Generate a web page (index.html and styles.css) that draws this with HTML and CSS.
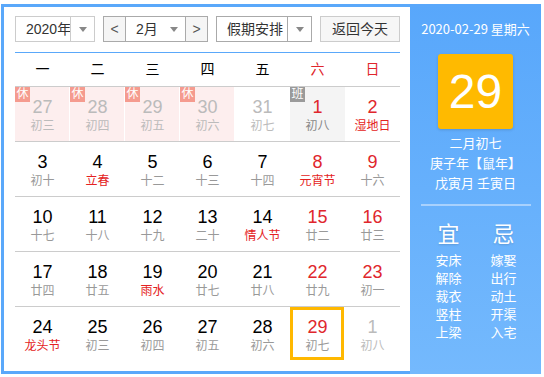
FILE: index.html
```html
<!DOCTYPE html>
<html lang="zh-CN">
    <head>
        <meta charset="UTF-8" />
        <title>万年历</title>
        <link rel="stylesheet" href="styles.css">
    </head>
    <body>
        <div class="calendar">
            <div class="main">
                <div class="toolbar">
                    <div class="select year">
                        <span class="text">2020年</span>
                        <span class="arrow"></span>
                    </div>
                    <div class="select month">
                        <span class="btn prev">&lt;</span>
                        <span class="text">2月</span>
                        <span class="arrow plain"></span>
                        <span class="btn next">&gt;</span>
                    </div>
                    <div class="select holiday">
                        <span class="text">假期安排</span>
                        <span class="arrow"></span>
                    </div>
                    <div class="today-btn">返回今天</div>
                </div>
                <div class="rule"></div>
                <div class="week">
                    <span>一</span><span>二</span><span>三</span><span>四</span><span>五</span>
                    <span class="red">六</span><span class="red">日</span>
                </div>
                <div class="days">
                    <div class="cell rest faded"><span class="tag">休</span><span class="num">27</span><span class="lunar">初三</span></div>
                    <div class="cell rest faded"><span class="tag">休</span><span class="num">28</span><span class="lunar">初四</span></div>
                    <div class="cell rest faded"><span class="tag">休</span><span class="num">29</span><span class="lunar">初五</span></div>
                    <div class="cell rest faded"><span class="tag">休</span><span class="num">30</span><span class="lunar">初六</span></div>
                    <div class="cell faded"><span class="num">31</span><span class="lunar">初七</span></div>
                    <div class="cell work weekend"><span class="tag">班</span><span class="num">1</span><span class="lunar">初八</span></div>
                    <div class="cell weekend"><span class="num">2</span><span class="lunar fest">湿地日</span></div>

                    <div class="cell"><span class="num">3</span><span class="lunar">初十</span></div>
                    <div class="cell"><span class="num">4</span><span class="lunar fest">立春</span></div>
                    <div class="cell"><span class="num">5</span><span class="lunar">十二</span></div>
                    <div class="cell"><span class="num">6</span><span class="lunar">十三</span></div>
                    <div class="cell"><span class="num">7</span><span class="lunar">十四</span></div>
                    <div class="cell weekend"><span class="num">8</span><span class="lunar fest">元宵节</span></div>
                    <div class="cell weekend"><span class="num">9</span><span class="lunar">十六</span></div>

                    <div class="cell"><span class="num">10</span><span class="lunar">十七</span></div>
                    <div class="cell"><span class="num">11</span><span class="lunar">十八</span></div>
                    <div class="cell"><span class="num">12</span><span class="lunar">十九</span></div>
                    <div class="cell"><span class="num">13</span><span class="lunar">二十</span></div>
                    <div class="cell"><span class="num">14</span><span class="lunar fest">情人节</span></div>
                    <div class="cell weekend"><span class="num">15</span><span class="lunar">廿二</span></div>
                    <div class="cell weekend"><span class="num">16</span><span class="lunar">廿三</span></div>

                    <div class="cell"><span class="num">17</span><span class="lunar">廿四</span></div>
                    <div class="cell"><span class="num">18</span><span class="lunar">廿五</span></div>
                    <div class="cell"><span class="num">19</span><span class="lunar fest">雨水</span></div>
                    <div class="cell"><span class="num">20</span><span class="lunar">廿七</span></div>
                    <div class="cell"><span class="num">21</span><span class="lunar">廿八</span></div>
                    <div class="cell weekend"><span class="num">22</span><span class="lunar">廿九</span></div>
                    <div class="cell weekend"><span class="num">23</span><span class="lunar">初一</span></div>

                    <div class="cell"><span class="num">24</span><span class="lunar fest">龙头节</span></div>
                    <div class="cell"><span class="num">25</span><span class="lunar">初三</span></div>
                    <div class="cell"><span class="num">26</span><span class="lunar">初四</span></div>
                    <div class="cell"><span class="num">27</span><span class="lunar">初五</span></div>
                    <div class="cell"><span class="num">28</span><span class="lunar">初六</span></div>
                    <div class="cell weekend today"><span class="num">29</span><span class="lunar">初七</span></div>
                    <div class="cell faded"><span class="num">1</span><span class="lunar">初八</span></div>
                </div>
            </div>
            <div class="side">
                <div class="date">2020-02-29 星期六</div>
                <div class="big">29</div>
                <div class="lunar-info">
                    <p>二月初七</p>
                    <p>庚子年【鼠年】</p>
                    <p>戊寅月 壬寅日</p>
                </div>
                <div class="divider"></div>
                <div class="yiji">
                    <div class="col">
                        <h3>宜</h3>
                        <p>安床</p><p>解除</p><p>裁衣</p><p>竖柱</p><p>上梁</p>
                    </div>
                    <div class="col">
                        <h3>忌</h3>
                        <p>嫁娶</p><p>出行</p><p>动土</p><p>开渠</p><p>入宅</p>
                    </div>
                </div>
            </div>
        </div>
    </body>
</html>
```

FILE: styles.css
```css
* {
    padding: 0;
    margin: 0;
    box-sizing: border-box;
}

body {
    background: #fff;
    font-family: "Liberation Sans", "Noto Sans CJK SC", sans-serif;
    color: #000;
}

.calendar {
    display: flex;
    width: 540px;
    height: 370px;
    margin: 4px 0 0 1px;
}

.main {
    width: 409px;
    border: 3px solid #5aa8fa;
    border-right: none;
    padding: 9px 10px 10px 11px;
}

/* toolbar */
.toolbar {
    display: flex;
    height: 26px;
}

.select {
    display: flex;
    height: 26px;
    border: 1px solid #ccc;
    font-size: 14px;
    line-height: 24px;
    color: #333;
    white-space: nowrap;
}

.select .text {
    padding-left: 10px;
    overflow: hidden;
}

.arrow {
    display: flex;
    align-items: center;
    justify-content: center;
    width: 24px;
    flex-shrink: 0;
    border-left: 1px solid #ccc;
}

.arrow::after {
    content: "";
    border: 4px solid transparent;
    border-top: 5px solid #888;
    border-bottom: 0;
}

.arrow.plain {
    border-left: none;
    width: 22px;
}

.year {
    width: 80px;
}

.year .text {
    width: 55px;
}

.month {
    width: 105px;
    margin-left: 8px;
    border-color: #aaa;
}

.month .text {
    flex: 1;
}

.btn {
    width: 22px;
    flex-shrink: 0;
    background: #f5f5f5;
    text-align: center;
    color: #555;
}

.prev {
    border-right: 1px solid #aaa;
}

.next {
    border-left: 1px solid #aaa;
}

.holiday {
    width: 96px;
    margin-left: 8px;
    border-color: #aaa;
}

.holiday .text {
    width: 70px;
    padding-left: 10px;
}

.holiday .arrow {
    border-left-color: #aaa;
}

.today-btn {
    width: 80px;
    margin-left: 8px;
    border: 1px solid #ccc;
    background: #f6f6f6;
    font-size: 14px;
    line-height: 24px;
    text-align: center;
    color: #333;
    white-space: nowrap;
}

.rule {
    height: 1px;
    background: #5aa8fa;
    margin-top: 10px;
}

/* grid */
.week {
    display: grid;
    grid-template-columns: repeat(7, 55px);
    height: 33px;
    line-height: 33px;
    font-size: 14px;
    text-align: center;
}

.red {
    color: #e0262c;
}

.days {
    display: grid;
    grid-template-columns: repeat(7, 55px);
    grid-auto-rows: 55px;
}

.cell {
    position: relative;
    border-top: 1px solid #ccc;
    padding-top: 11px;
    text-align: center;
}

.num {
    display: block;
    font-size: 18px;
    line-height: 18px;
}

.lunar {
    display: block;
    font-size: 12px;
    line-height: 20px;
    color: #999;
}

.weekend .num {
    color: #e0262c;
}

.fest {
    color: #e42222;
}

.faded .num,
.faded .lunar {
    color: #bbb;
}

.rest {
    background: #fdeeee;
    box-shadow: inset -1px 0 #fff;
}

.work {
    background: #f4f4f4;
}

.work .lunar {
    color: #888;
}

.tag {
    position: absolute;
    left: 0;
    top: 0;
    width: 15px;
    height: 15px;
    font-size: 12px;
    line-height: 15px;
    color: #fff;
    background: #f59b8f;
}

.work .tag {
    background: #9a9a9a;
}

.today::before {
    content: "";
    position: absolute;
    top: 0;
    left: 0;
    right: 1px;
    bottom: 1px;
    border: 3px solid #ffb800;
}

/* side panel */
.side {
    width: 131px;
    background: linear-gradient(#58a7fb, #74b9fd);
    color: #fff;
    text-align: center;
    padding-top: 15px;
    font-family: "Noto Sans CJK SC", "Liberation Sans", sans-serif;
}

.date {
    font-size: 13px;
    line-height: 20px;
}

.big {
    width: 75px;
    height: 75px;
    margin: 15px auto 0;
    background: #ffba00;
    border-radius: 3px;
    box-shadow: 0 1px 3px rgba(0, 0, 0, 0.15);
    font-family: "Liberation Sans", sans-serif;
    font-size: 48px;
    line-height: 75px;
}

.lunar-info {
    margin-top: 4px;
    font-size: 13px;
    line-height: 20px;
}

.divider {
    height: 2px;
    margin: 11px 10px 0 11px;
    background: #a8d1fd;
}

.yiji {
    display: flex;
    margin: 12px 10px 0 11px;
}

.yiji .col {
    flex: 1;
}

.yiji h3 {
    font-size: 22px;
    line-height: 28px;
    font-weight: normal;
    text-shadow: 0 1px 2px rgba(0, 0, 0, 0.15);
    margin-bottom: 5px;
}

.yiji p {
    font-size: 13px;
    line-height: 18px;
}
```
